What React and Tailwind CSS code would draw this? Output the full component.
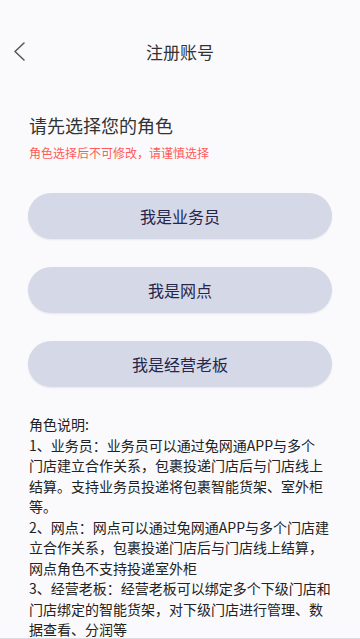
const roles = ['我是业务员', '我是网点', '我是经营老板'];

const notes = [
  '角色说明:',
  '1、业务员：业务员可以通过兔网通APP与多个',
  '门店建立合作关系，包裹投递门店后与门店线上',
  '结算。支持业务员投递将包裹智能货架、室外柜',
  '等。',
  '2、网点：网点可以通过兔网通APP与多个门店建',
  '立合作关系，包裹投递门店后与门店线上结算，',
  '网点角色不支持投递室外柜',
  '3、经营老板：经营老板可以绑定多个下级门店和',
  '门店绑定的智能货架，对下级门店进行管理、数',
  '据查看、分润等',
];

export default function App() {
  return (
    <div
      className="flex h-[639px] w-[360px] flex-col overflow-hidden bg-[#fafafc]"
      style={{ fontFamily: '"Noto Sans CJK SC", "Noto Sans", sans-serif' }}
    >
      <div className="flex-1 overflow-hidden">
        <header className="relative mt-[40px] flex h-[24px] items-center justify-center">
          <button className="absolute left-[13px] top-[1px]">
            <svg width="12" height="20" viewBox="0 0 12 20" fill="none">
              <polyline
                points="11,2 2,10.5 11,19"
                stroke="#555"
                strokeWidth="1.5"
                strokeLinecap="round"
                strokeLinejoin="round"
              />
            </svg>
          </button>
          <h1 className="text-[17px] leading-[24px] text-[#333]">注册账号</h1>
        </header>

        <div className="px-[28px]">
          <h2 className="mt-[48px] pl-px text-[18px] leading-[26px] text-[#333]">请先选择您的角色</h2>
          <p className="mt-[6px] pl-px text-[12px] leading-[18px] text-[#ff5b5b]">
            角色选择后不可修改，请谨慎选择
          </p>

          <div className="mt-[31px] flex flex-col gap-[28px]">
            {roles.map((r) => (
              <button
                key={r}
                className="h-[46px] w-[304px] rounded-full bg-[#d5d8e6] text-[16px] text-[#26264a] shadow-[0_1px_2px_rgba(0,0,0,0.08)]"
              >
                {r}
              </button>
            ))}
          </div>

          <div className="mt-[27px] pl-px text-[14px] leading-[20.5px] text-[#222]">
            {notes.map((line, i) => (
              <div key={i} className="whitespace-nowrap">
                {line}
              </div>
            ))}
          </div>
        </div>
      </div>
      <div className="h-px bg-[#dcdce0]" />
    </div>
  );
}
